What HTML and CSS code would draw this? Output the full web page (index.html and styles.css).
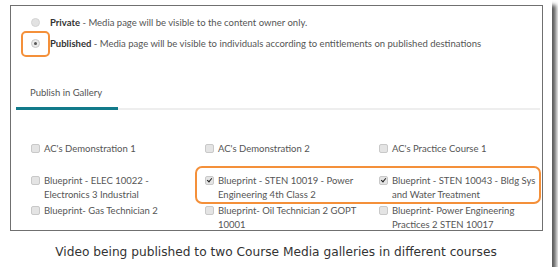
FILE: index.html
```html
<!DOCTYPE html>
<html>
<head>
<meta charset="utf-8">
<link rel="stylesheet" href="styles.css">
</head>
<body>
<div class="paper">
  <div class="shot">
    <div class="radios">
      <div class="radio-row"><span class="radio"></span><span class="rlabel"><b>Private</b> - Media page will be visible to the content owner only.</span></div>
      <div class="radio-row"><span class="radio checked"></span><span class="rlabel"><b>Published</b> - Media page will be visible to individuals according to entitlements on published destinations</span></div>
    </div>
    <div class="tabs">
      <div class="tab">Publish in Gallery</div>
    </div>
    <div class="grid">
      <div class="item"><span class="cb"></span><span class="clabel">AC's Demonstration 1</span></div>
      <div class="item"><span class="cb"></span><span class="clabel">AC's Demonstration 2</span></div>
      <div class="item"><span class="cb"></span><span class="clabel">AC's Practice Course 1</span></div>
      <div class="item"><span class="cb"></span><span class="clabel">Blueprint - ELEC 10022 - Electronics 3 Industrial</span></div>
      <div class="item"><span class="cb checked"></span><span class="clabel">Blueprint - STEN 10019 - Power Engineering 4th Class 2</span></div>
      <div class="item"><span class="cb checked"></span><span class="clabel">Blueprint - STEN 10043 - Bldg Sys and Water Treatment</span></div>
      <div class="item"><span class="cb"></span><span class="clabel">Blueprint- Gas Technician 2</span></div>
      <div class="item"><span class="cb"></span><span class="clabel">Blueprint- Oil Technician 2 GOPT 10001</span></div>
      <div class="item"><span class="cb"></span><span class="clabel">Blueprint- Power Engineering Practices 2 STEN 10017</span></div>
    </div>
    <div class="hl hl-radio"></div>
    <div class="hl hl-row"></div>
  </div>
  <div class="caption">Video being published to two Course Media galleries in different courses</div>
</div>
</body>
</html>
```

FILE: styles.css
```css
html, body {
  margin: 0;
  padding: 0;
  background: #ffffff;
}
.paper {
  width: 552px;
  height: 267px;
  background: #fff;
  box-shadow: 4px 5px 4px rgba(0, 0, 0, 0.65);
  padding: 5px 0 0 10px;
  box-sizing: border-box;
}
.shot {
  position: relative;
  width: 533px;
  height: 226px;
  border: 1px solid #707070;
  box-sizing: border-box;
  overflow: hidden;
  font-family: Lato, "Liberation Sans", sans-serif;
  font-size: 9.5px;
  color: #555;
}
.radios {
  padding: 10px 0 0 20px;
  display: flex;
  flex-direction: column;
  gap: 9px;
}
.radio-row {
  display: flex;
  align-items: center;
  height: 12px;
}
.radio {
  width: 9px;
  height: 9px;
  border-radius: 50%;
  background: #e2e2e2;
  border: 1px solid #d4d4d4;
  box-sizing: border-box;
  margin-right: 10px;
  position: relative;
}
.radio.checked {
  background: #eaeaea;
  border-color: #c8c8c8;
}
.radio.checked::after {
  content: "";
  position: absolute;
  left: 2px;
  top: 2px;
  width: 3px;
  height: 3px;
  border-radius: 50%;
  background: #555;
}
.rlabel b {
  color: #333;
  font-weight: 700;
}
.tabs {
  margin: 38px 2px 0 5px;
  border-bottom: 2px solid #eeeeee;
}
.tab {
  display: inline-block;
  width: 102px;
  box-sizing: border-box;
  padding: 0 0 9px 14px;
  color: #555;
  border-bottom: 3px solid #127a8a;
  margin-bottom: -2px;
}
.grid {
  display: grid;
  grid-template-columns: 174px 174px 174px;
  padding: 32px 0 0 20px;
  row-gap: 18.5px;
  line-height: 13.5px;
}
.grid .item:nth-child(n+7) {
  margin-top: -15.5px;
}
.item {
  display: flex;
  align-items: flex-start;
}
.cb {
  flex: none;
  width: 9px;
  height: 9px;
  margin-top: 2px;
  margin-right: 4px;
  border-radius: 2px;
  background: #e4e4e4;
  border: 1px solid #c9c9c9;
  box-sizing: border-box;
  position: relative;
}
.cb.checked::after {
  content: "";
  position: absolute;
  left: 2px;
  top: 0px;
  width: 2px;
  height: 4px;
  border-right: 1.5px solid #222;
  border-bottom: 1.5px solid #222;
  transform: rotate(40deg);
}
.clabel {
  width: 148px;
  color: #555;
}
.hl {
  position: absolute;
  border: 2.5px solid #f4903a;
  border-radius: 5px;
  box-sizing: border-box;
}
.hl-radio {
  left: 10px;
  top: 25px;
  width: 29px;
  height: 26px;
}
.hl-row {
  left: 184px;
  top: 160px;
  width: 346px;
  height: 38px;
  border-radius: 7px;
}
.caption {
  font-family: "DejaVu Sans", Verdana, sans-serif;
  font-size: 12.2px;
  color: #333;
  text-align: center;
  margin: 14px 0 0 -10px;
  width: 552px;
}
```
